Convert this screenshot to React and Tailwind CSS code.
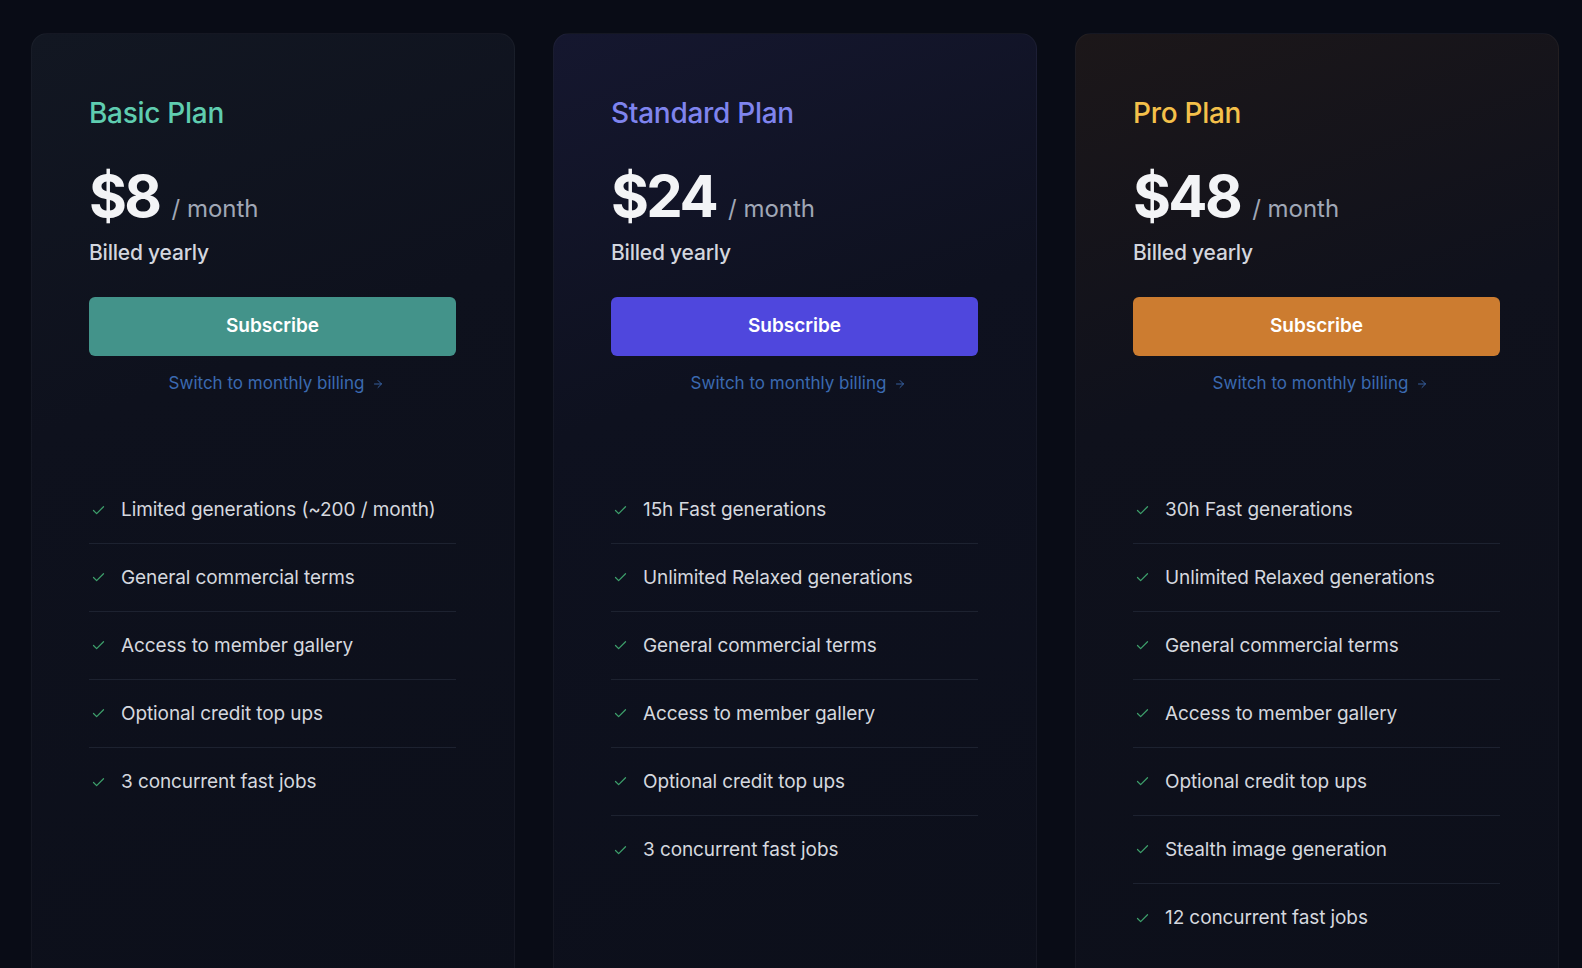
import { Check, ArrowRight } from 'lucide-react';

const plans = [
  {
    name: 'Basic Plan',
    price: '$8',
    titleColor: 'text-[#5fcdb0]',
    button: 'bg-[#43938a]',
    bg: 'bg-[linear-gradient(160deg,#121722_0%,#0e111d_35%,#0c0f1a_100%)]',
    features: [
      'Limited generations (~200 / month)',
      'General commercial terms',
      'Access to member gallery',
      'Optional credit top ups',
      '3 concurrent fast jobs',
    ],
  },
  {
    name: 'Standard Plan',
    price: '$24',
    titleColor: 'text-[#7f84ee]',
    button: 'bg-[#4f47dd]',
    bg: 'bg-[linear-gradient(160deg,#15172f_0%,#0e111f_35%,#0c0f1a_100%)]',
    features: [
      '15h Fast generations',
      'Unlimited Relaxed generations',
      'General commercial terms',
      'Access to member gallery',
      'Optional credit top ups',
      '3 concurrent fast jobs',
    ],
  },
  {
    name: 'Pro Plan',
    price: '$48',
    titleColor: 'text-[#f4c04a]',
    button: 'bg-[#cc7c30]',
    bg: 'bg-[linear-gradient(160deg,#1c1719_0%,#0f111c_35%,#0c0f1a_100%)]',
    features: [
      '30h Fast generations',
      'Unlimited Relaxed generations',
      'General commercial terms',
      'Access to member gallery',
      'Optional credit top ups',
      'Stealth image generation',
      '12 concurrent fast jobs',
    ],
  },
];

function PlanCard({ plan }) {
  return (
    <div className={`w-[484px] shrink-0 rounded-2xl border border-white/[0.035] ${plan.bg} pl-[57px] pr-[58px] pt-[61px] pb-16`}>
      <h2 className={`text-[28px] leading-9 font-medium tracking-[-0.01em] ${plan.titleColor}`}>{plan.name}</h2>
      <div className="mt-[35px] flex items-baseline gap-3">
        <span className="text-[58px] leading-[60px] font-bold tracking-[-0.045em] text-[#f3f4f6]">{plan.price}</span>
        <span className="text-2xl font-normal text-[#a0a7b6]">/ month</span>
      </div>
      <p className="mt-[13px] text-[21px] leading-7 font-medium tracking-[-0.01em] text-[#d3d6de]">Billed yearly</p>
      <button className={`mt-[30px] w-full h-[59px] rounded-md ${plan.button} text-[19px] font-semibold text-white`}>
        Subscribe
      </button>
      <div className="mt-[15px] pl-2 flex items-center justify-center gap-2 text-[17px] leading-6 text-[#3b6ab0]">
        <span>Switch to monthly billing</span>
        <ArrowRight size={12} strokeWidth={1.75} className="mt-0.5" />
      </div>
      <ul className="mt-[82px] divide-y divide-[#1d2230]">
        {plan.features.map(f => (
          <li key={f} className="flex items-center h-[68px] first:h-[67px]">
            <Check size={15} strokeWidth={2} className="ml-[2px] text-[#3d9f6b]" />
            <span className="ml-[15px] text-[19px] leading-7 tracking-[-0.005em] text-[#d5d8df]">{f}</span>
          </li>
        ))}
      </ul>
    </div>
  );
}

export default function App() {
  return (
    <div
      className="h-[968px] overflow-hidden bg-[#090c16] pl-[31px] pt-[33px]"
      style={{ fontFamily: 'Inter, "Noto Sans", sans-serif' }}
    >
      <div className="flex gap-[38px] items-stretch">
        {plans.map(p => (
          <PlanCard key={p.name} plan={p} />
        ))}
      </div>
    </div>
  );
}
